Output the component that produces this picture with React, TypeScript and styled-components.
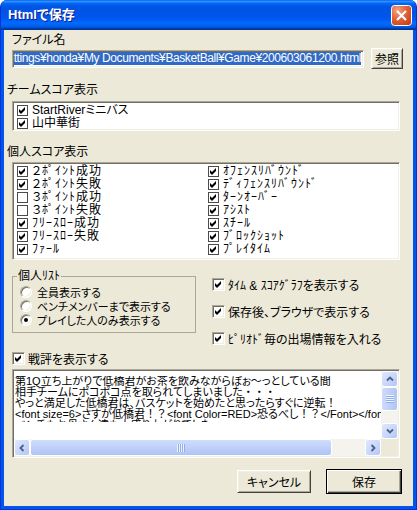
import styled, { createGlobalStyle } from 'styled-components';

const GlobalStyle = createGlobalStyle`
  html, body {
    margin: 0;
    padding: 0;
    background: #ffffff;
  }
  body {
    font-family: "Liberation Sans", "Noto Sans CJK JP", sans-serif;
    font-size: 12px;
    color: #000;
    font-feature-settings: "palt";
  }
`;

// window frame
const Window = styled.div`
  width: 417px;
  height: 510px;
  box-sizing: border-box;
  display: flex;
  flex-direction: column;
  background: #0055ea;
  border: 1px solid #0831d9;
  border-top: none;
  border-radius: 7px 7px 0 0;
  padding: 0 3px 3px;
  overflow: hidden;
`;
const TitleBar = styled.div`
  height: 30px;
  flex: none;
  display: flex;
  align-items: center;
  margin: 0 -3px;
  padding: 0 4px 0 7px;
  background: linear-gradient(to bottom, #0058ee 0%, #3593ff 4%, #288eff 6%, #127dff 8%, #036ffc 10%, #0262ee 14%, #0057e5 20%, #0054e3 24%, #0055eb 56%, #005bf5 66%, #026afe 76%, #0062ef 86%, #0052d6 92%, #0040ab 94%, #003092 100%);
`;
const Title = styled.span`
  flex: 1;
  color: #fff;
  font-weight: bold;
  font-size: 13px;
  line-height: 16px;
  text-shadow: 1px 1px #0f1b8c;
`;
const Body = styled.div`
  flex: 1;
  display: flex;
  flex-direction: column;
  background: #ece9d8;
  padding: 0 10px 0 8px;
`;

// labels and rows
const Label = styled.div<{ $top: number; $outdent?: boolean }>`
  margin-top: ${p => p.$top}px;
  margin-left: ${p => (p.$outdent ? -5 : 0)}px;
  line-height: 12px;
  height: 12px;
  white-space: nowrap;
`;
const FileRow = styled.div`
  display: flex;
  align-items: center;
  gap: 7px;
  margin-top: 2px;
`;
const PathInput = styled.div`
  width: 353px;
  height: 18px;
  box-sizing: border-box;
  display: flex;
  justify-content: flex-end;
  align-items: center;
  padding: 0 2px 0 1px;
  overflow: hidden;
  background: #fff;
  border: 1px solid;
  border-color: #aca899 #fff #fff #aca899;
  box-shadow: inset 1px 1px #716f64, inset -1px -1px #f1efe2;
`;
const Selected = styled.span`
  flex: none;
  white-space: nowrap;
  line-height: 13px;
  letter-spacing: -0.4px;
  background: #316ac5;
  color: #fff;
`;
const Button = styled.button<{ $w: number; $h: number; $default?: boolean }>`
  width: ${p => p.$w}px;
  height: ${p => p.$h}px;
  flex: none;
  padding: 0;
  font: inherit;
  font-size: 12px;
  color: #000;
  background: #ece9d8;
  border: 1px solid;
  border-color: ${p => (p.$default ? '#000' : '#fff #404040 #404040 #fff')};
  box-shadow: ${p =>
    p.$default
      ? 'inset 1px 1px #fff, inset -1px -1px #404040, inset -2px -2px #aca899'
      : 'inset 1px 1px #f1efe2, inset -1px -1px #aca899'};
`;

// list boxes with check items
const ListBox = styled.div<{ $h: number; $top: number }>`
  height: ${p => p.$h}px;
  margin-top: ${p => p.$top}px;
  margin-right: 3px;
  box-sizing: border-box;
  padding: 2px 0 0 4px;
  background: #fff;
  border: 1px solid;
  border-color: #aca899 #fff #fff #aca899;
  box-shadow: inset 1px 1px #716f64, inset -1px -1px #f1efe2;
`;
const TwoColumns = styled.div`
  display: grid;
  grid-template-columns: 191px 1fr;
  grid-template-rows: repeat(7, 13px);
  grid-auto-flow: column;
`;
const Item = styled.div<{ $wide?: boolean }>`
  height: 13px;
  display: flex;
  align-items: center;
  gap: 4px;
  white-space: nowrap;
  line-height: 13px;
  letter-spacing: ${p => (p.$wide ? 1 : 0)}px;
`;
const SmallBox = styled.span`
  flex: none;
  width: 11px;
  height: 11px;
  box-sizing: border-box;
  display: flex;
  align-items: center;
  justify-content: center;
  background: #fff;
  border: 1px solid #4b4b4b;
`;
const Box = styled.span`
  flex: none;
  width: 13px;
  height: 13px;
  box-sizing: border-box;
  display: flex;
  align-items: center;
  justify-content: center;
  background: #fff;
  border: 1px solid;
  border-color: #aca899 #fff #fff #aca899;
  box-shadow: inset 1px 1px #716f64, inset -1px -1px #f1efe2;
`;
const Tick = () => (
  <svg width="7" height="7" viewBox="0 0 7 7">
    <path d="M0 2L2 4L6 0V3L2 7L0 5Z" fill="#000" />
  </svg>
);

// group box and options
const MidRow = styled.div`
  display: flex;
  gap: 16px;
  margin-top: 9px;
`;
const GroupBox = styled.fieldset`
  width: 184px;
  height: 64px;
  box-sizing: border-box;
  margin: 0;
  padding: 0;
  border: 1px solid #aca899;
`;
const Legend = styled.legend`
  margin-left: 4px;
  padding: 0 1px;
  line-height: 14px;
  font-size: 12px;
`;
const RadioList = styled.div`
  padding: 2px 0 0 7px;
`;
const RadioRow = styled.div`
  height: 14px;
  display: flex;
  align-items: center;
  gap: 5px;
  white-space: nowrap;
  font-size: 11px;
`;
const Radio = styled.span<{ $on?: boolean }>`
  flex: none;
  width: 12px;
  height: 12px;
  box-sizing: border-box;
  border-radius: 50%;
  display: flex;
  align-items: center;
  justify-content: center;
  background: #fff;
  border: 1px solid;
  border-color: #aca899 #fff #fff #aca899;
  box-shadow: inset 1px 1px #716f64, inset -1px -1px #f1efe2;
  &::after {
    content: '';
    width: 4px;
    height: 4px;
    border-radius: 50%;
    background: ${p => (p.$on ? '#000' : 'transparent')};
  }
`;
const Options = styled.div`
  display: flex;
  flex-direction: column;
  gap: 14px;
  padding-top: 9px;
`;
const CheckRow = styled.div<{ $top?: number }>`
  height: 13px;
  margin-top: ${p => p.$top ?? 0}px;
  display: flex;
  align-items: center;
  gap: 3px;
  white-space: nowrap;
`;

// comment edit box with scroll bars
const Memo = styled.div`
  height: 89px;
  margin-top: 4px;
  margin-right: 3px;
  box-sizing: border-box;
  display: grid;
  grid-template-columns: 1fr 17px;
  grid-template-rows: 1fr 17px;
  background: #fff;
  border: 1px solid;
  border-color: #aca899 #fff #fff #aca899;
  box-shadow: inset 1px 1px #716f64, inset -1px -1px #f1efe2;
  padding: 1px;
`;
const MemoText = styled.div`
  padding: 5px 0 0 1px;
  overflow: hidden;
`;
const Lines = styled.div`
  height: 46px;
  overflow: hidden;
  white-space: nowrap;
  font-size: 11px;
  line-height: 11px;
`;
// full-width punctuation keeps its em width
const Full = styled.span`
  font-feature-settings: normal;
`;
const VScroll = styled.div`
  display: flex;
  flex-direction: column;
  background: #f4f3ee;
`;
const HScroll = styled.div`
  display: flex;
  background: #f4f3ee;
`;
const Corner = styled.div`
  background: #ece9d8;
`;
const ScrollButton = styled.div`
  width: 17px;
  height: 16px;
  flex: none;
  box-sizing: border-box;
  display: flex;
  align-items: center;
  justify-content: center;
  border: 1px solid #fff;
  border-radius: 3px;
  background: linear-gradient(135deg, #dfe8fd 0%, #c6d5fa 60%, #b3c6f3 100%);
  ${HScroll} & {
    width: 16px;
    height: 17px;
  }
`;
const Arrow = styled.svg<{ $deg: number }>`
  transform: rotate(${p => p.$deg}deg);
`;
const Chevron = ({ deg }: { deg: number }) => (
  <Arrow $deg={deg} width="8" height="8" viewBox="0 0 8 8">
    <path d="M1 5.5L4 2.5L7 5.5" fill="none" stroke="#4d6185" strokeWidth="1.8" />
  </Arrow>
);
const Thumb = styled.div<{ $size: number; $horizontal?: boolean }>`
  flex: none;
  ${p => (p.$horizontal ? `width: ${p.$size}px;` : `height: ${p.$size}px;`)}
  box-sizing: border-box;
  display: flex;
  align-items: center;
  justify-content: center;
  border: 1px solid #fff;
  border-radius: 3px;
  background: linear-gradient(${p => (p.$horizontal ? '180deg' : '90deg')}, #cfdcfc 0%, #bccdf8 60%, #b1c4f4 100%);
`;
const Grip = styled.span<{ $horizontal?: boolean }>`
  width: 8px;
  height: 8px;
  background: repeating-linear-gradient(
    ${p => (p.$horizontal ? 'to right' : 'to bottom')},
    #eef3fe 0 1px,
    #8faeed 1px 2px
  );
`;
const Track = styled.div`
  flex: 1;
`;

const ButtonRow = styled.div`
  display: flex;
  justify-content: flex-end;
  align-items: center;
  gap: 15px;
  margin-top: 11px;
  margin-right: 1px;
`;

const CloseIcon = () => (
  <svg width="21" height="21" viewBox="0 0 21 21">
    <defs>
      <radialGradient id="closeFill" cx="0.3" cy="0.25" r="0.95">
        <stop offset="0" stopColor="#f2a385" />
        <stop offset="0.45" stopColor="#e2633a" />
        <stop offset="1" stopColor="#c13d14" />
      </radialGradient>
    </defs>
    <rect x="0.5" y="0.5" width="20" height="20" rx="3" fill="url(#closeFill)" stroke="#fff" />
    <path d="M6 6L15 15M15 6L6 15" stroke="#fff" strokeWidth="2.2" />
  </svg>
);

const teams = ['StartRiverミニバス', '山中華街'];

const stats = [
  { label: '２ﾎﾟｲﾝﾄ成功', on: true },
  { label: '２ﾎﾟｲﾝﾄ失敗', on: true },
  { label: '３ﾎﾟｲﾝﾄ成功', on: false },
  { label: '３ﾎﾟｲﾝﾄ失敗', on: false },
  { label: 'ﾌﾘｰｽﾛｰ成功', on: true },
  { label: 'ﾌﾘｰｽﾛｰ失敗', on: true },
  { label: 'ﾌｧｰﾙ', on: true },
  { label: 'ｵﾌｪﾝｽﾘﾊﾞｳﾝﾄﾞ', on: true },
  { label: 'ﾃﾞｨﾌｪﾝｽﾘﾊﾞｳﾝﾄﾞ', on: true },
  { label: 'ﾀｰﾝｵｰﾊﾞｰ', on: true },
  { label: 'ｱｼｽﾄ', on: true },
  { label: 'ｽﾁｰﾙ', on: true },
  { label: 'ﾌﾞﾛｯｸｼｮｯﾄ', on: true },
  { label: 'ﾌﾟﾚｲﾀｲﾑ', on: true },
];

const listModes = [
  { label: '全員表示する', on: false },
  { label: 'ベンチメンバーまで表示する', on: false },
  { label: 'プレイした人のみ表示する', on: true },
];

const options = ['ﾀｲﾑ & ｽｺｱｸﾞﾗﾌを表示する', '保存後、ブラウザで表示する', 'ﾋﾟﾘｵﾄﾞ毎の出場情報を入れる'];

export default function App() {
  return (
    <>
      <GlobalStyle />
      <Window>
        <TitleBar>
          <Title>Htmlで保存</Title>
          <CloseIcon />
        </TitleBar>
        <Body>
          <Label $top={4}>ファイル名</Label>
          <FileRow>
            <PathInput>
              <Selected>ttings¥honda¥My Documents¥BasketBall¥Game¥200603061200.html</Selected>
            </PathInput>
            <Button $w={32} $h={21}>参照</Button>
          </FileRow>

          <Label $top={15} $outdent>チームスコア表示</Label>
          <ListBox $h={30} $top={5}>
            {teams.map(t => (
              <Item key={t}>
                <SmallBox><Tick /></SmallBox>
                {t}
              </Item>
            ))}
          </ListBox>

          <Label $top={15} $outdent>個人スコア表示</Label>
          <ListBox $h={98} $top={4}>
            <TwoColumns>
              {stats.map(s => (
                <Item key={s.label} $wide>
                  <SmallBox>{s.on && <Tick />}</SmallBox>
                  {s.label}
                </Item>
              ))}
            </TwoColumns>
          </ListBox>

          <MidRow>
            <GroupBox>
              <Legend>個人ﾘｽﾄ</Legend>
              <RadioList>
                {listModes.map(m => (
                  <RadioRow key={m.label}>
                    <Radio $on={m.on} />
                    {m.label}
                  </RadioRow>
                ))}
              </RadioList>
            </GroupBox>
            <Options>
              {options.map(o => (
                <CheckRow key={o}>
                  <Box><Tick /></Box>
                  {o}
                </CheckRow>
              ))}
            </Options>
          </MidRow>

          <CheckRow $top={7}>
            <Box><Tick /></Box>
            戦評を表示する
          </CheckRow>
          <Memo>
            <MemoText>
              <Lines>
                <div>第1Q立ち上がりで低橋君がお茶を飲みながらぼぉ～っとしている間</div>
                <div>相手チームにポコポコ点を取られてしまいました<Full>・・・</Full></div>
                <div>やっと満足した低橋君は、バスケットを始めたと思ったらすぐに逆転<Full>！</Full></div>
                <div>
                  {'<font size=6>さすが低橋君'}<Full>！？</Full>
                  {'<font Color=RED>恐るべし'}<Full>！？</Full>
                  {'</Font></font>'}
                </div>
                <div>ベンチもお母さん達も大盛り上がりでした。</div>
              </Lines>
            </MemoText>
            <VScroll>
              <ScrollButton><Chevron deg={0} /></ScrollButton>
              <Thumb $size={24}><Grip /></Thumb>
              <Track />
              <ScrollButton><Chevron deg={180} /></ScrollButton>
            </VScroll>
            <HScroll>
              <ScrollButton><Chevron deg={270} /></ScrollButton>
              <Thumb $size={302} $horizontal><Grip $horizontal /></Thumb>
              <Track />
              <ScrollButton><Chevron deg={90} /></ScrollButton>
            </HScroll>
            <Corner />
          </Memo>

          <ButtonRow>
            <Button $w={74} $h={23}>キャンセル</Button>
            <Button $w={76} $h={25} $default>保存</Button>
          </ButtonRow>
        </Body>
      </Window>
    </>
  );
}
